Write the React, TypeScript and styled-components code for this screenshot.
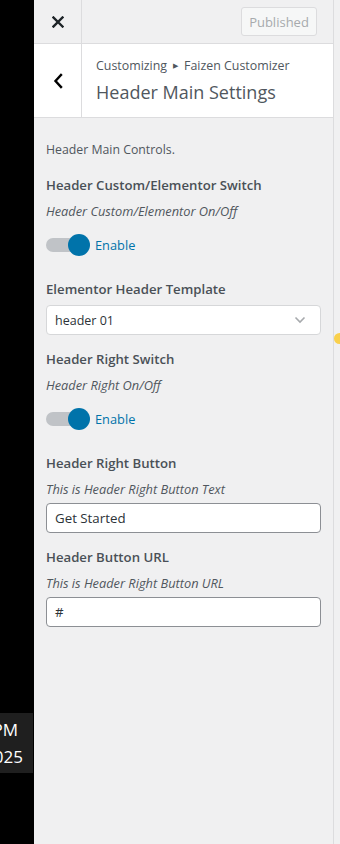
import React from "react";
import styled, { createGlobalStyle } from "styled-components";

const Global = createGlobalStyle`
  html, body { margin: 0; padding: 0; background: #f0f0f1; }
  body { font-family: "Open Sans", "Noto Sans", sans-serif; }
  * { box-sizing: border-box; }
`;

const Page = styled.div`
  position: relative;
  display: flex;
  width: 340px;
  height: 844px;
  overflow: hidden;
  background: #f0f0f1;
`;

const Strip = styled.div`
  flex: none;
  width: 34px;
  background: #000;
  display: flex;
  flex-direction: column;
  justify-content: flex-end;
  padding-bottom: 71px;
`;

const Clock = styled.div`
  width: 33px;
  height: 60px;
  background: #1f1f1f;
  color: #fff;
  font-family: "Open Sans", sans-serif;
  font-size: 17px;
  line-height: 27px;
  display: flex;
  flex-direction: column;
  justify-content: center;
  align-items: flex-end;
  overflow: hidden;
`;

const ClockLine = styled.span<{ $pr: number }>`
  padding-right: ${(p) => p.$pr}px;
  white-space: nowrap;
`;

const Panel = styled.div`
  flex: none;
  width: 300px;
  height: 100%;
  border-right: 1px solid #dcdcde;
  display: flex;
  flex-direction: column;
  color: #50575e;
`;

const TopBar = styled.div`
  height: 44px;
  display: flex;
  align-items: center;
  border-bottom: 1px solid #dcdcde;
`;

const IconCell = styled.div`
  width: 48px;
  height: 100%;
  border-right: 1px solid #dcdcde;
  display: flex;
  align-items: center;
  justify-content: center;
  color: #1d2327;
`;

const PublishedButton = styled.div`
  margin-left: auto;
  margin-right: 16px;
  width: 76px;
  height: 29px;
  border: 1px solid #dcdcde;
  border-radius: 3px;
  background: #f6f7f7;
  color: #a7aaad;
  font-size: 13px;
  display: flex;
  align-items: center;
  justify-content: center;
`;

const SectionHeader = styled.div`
  height: 74px;
  background: #fff;
  border-bottom: 1px solid #dcdcde;
  display: flex;
`;

const TitleBlock = styled.div`
  padding: 12px 0 0 14px;
  display: flex;
  flex-direction: column;
`;

const Breadcrumb = styled.div`
  font-size: 12.4px;
  line-height: 20px;
  color: #50575e;
  display: flex;
  align-items: center;
  gap: 6px;
`;

const Arrow = styled.span`
  font-size: 7px;
  color: #50575e;
`;

const Title = styled.div`
  font-size: 18px;
  line-height: 30px;
  color: #50575e;
  margin-top: 1px;
`;

const Content = styled.div`
  padding: 22px 12px 0 12px;
  display: flex;
  flex-direction: column;
`;

const Intro = styled.div`
  font-size: 12.3px;
  line-height: 20px;
  margin-bottom: 15px;
`;

const Control = styled.div`
  display: flex;
  flex-direction: column;
  margin-bottom: 14px;
`;

const Heading = styled.div`
  font-size: 13.2px;
  font-weight: 600;
  line-height: 20px;
  color: #4a5057;
  margin-bottom: 6px;
`;

const Desc = styled.div`
  font-size: 12.8px;
  font-style: italic;
  line-height: 20px;
  color: #50575e;
  margin-bottom: 4px;
`;

const ToggleRow = styled.div`
  margin-top: 9px;
  margin-bottom: 9px;
  height: 22px;
  display: flex;
  align-items: center;
  gap: 5px;
`;

const Toggle = styled.div`
  position: relative;
  width: 44px;
  height: 22px;
`;

const Track = styled.div`
  position: absolute;
  left: 0;
  top: 4px;
  width: 36px;
  height: 14px;
  border-radius: 7px;
  background: #c0c3c7;
`;

const Knob = styled.div`
  position: absolute;
  right: 0;
  top: 0;
  width: 22px;
  height: 22px;
  border-radius: 50%;
  background: #0073aa;
`;

const ToggleLabel = styled.span`
  font-size: 12.8px;
  color: #0073aa;
`;

const Field = styled.div<{ $light?: boolean }>`
  height: 30px;
  width: 275px;
  border: 1px solid ${(p) => (p.$light ? "#d6d7d9" : "#8c8f94")};
  border-radius: 4px;
  background: #fff;
  display: flex;
  align-items: center;
  padding: 0 14px 0 8px;
  color: #2c3338;
  font-size: ${(p) => (p.$light ? "12.5px" : "13.3px")};
`;

const FieldText = styled.span`
  flex: 1;
`;

const Dot = styled.div`
  position: absolute;
  left: 334px;
  top: 333px;
  width: 11px;
  height: 11px;
  border-radius: 50%;
  background: #f9d04c;
`;

const SwitchControl = ({ title, desc }: { title: string; desc: string }) => (
  <Control>
    <Heading>{title}</Heading>
    <Desc>{desc}</Desc>
    <ToggleRow>
      <Toggle>
        <Track />
        <Knob />
      </Toggle>
      <ToggleLabel>Enable</ToggleLabel>
    </ToggleRow>
  </Control>
);

export default function App() {
  return (
    <>
      <Global />
      <Page>
        <Strip>
          <Clock>
            <ClockLine $pr={15}>PM</ClockLine>
            <ClockLine $pr={10}>025</ClockLine>
          </Clock>
        </Strip>
        <Panel>
          <TopBar>
            <IconCell>
              <svg width="12" height="12" viewBox="0 0 12 12">
                <path d="M1.5 1.5 L10.5 10.5 M10.5 1.5 L1.5 10.5" stroke="#1d2327" strokeWidth="2.4" strokeLinecap="square" />
              </svg>
            </IconCell>
            <PublishedButton>Published</PublishedButton>
          </TopBar>
          <SectionHeader>
            <IconCell>
              <svg width="10" height="16" viewBox="0 0 10 16">
                <path d="M8 2 L2.5 8 L8 14" stroke="#000" strokeWidth="2.4" fill="none" strokeLinecap="square" />
              </svg>
            </IconCell>
            <TitleBlock>
              <Breadcrumb>
                <span>Customizing</span>
                <Arrow>▶</Arrow>
                <span>Faizen Customizer</span>
              </Breadcrumb>
              <Title>Header Main Settings</Title>
            </TitleBlock>
          </SectionHeader>
          <Content>
            <Intro>Header Main Controls.</Intro>
            <SwitchControl title="Header Custom/Elementor Switch" desc="Header Custom/Elementor On/Off" />
            <Control>
              <Heading>Elementor Header Template</Heading>
              <Field $light>
                <FieldText>header 01</FieldText>
                <svg width="12" height="8" viewBox="0 0 12 8">
                  <path d="M1.5 1.5 L6 6 L10.5 1.5" stroke="#a7aaad" strokeWidth="1.6" fill="none" />
                </svg>
              </Field>
            </Control>
            <SwitchControl title="Header Right Switch" desc="Header Right On/Off" />
            <Control>
              <Heading>Header Right Button</Heading>
              <Desc>This is Header Right Button Text</Desc>
              <Field>
                <FieldText>Get Started</FieldText>
              </Field>
            </Control>
            <Control>
              <Heading>Header Button URL</Heading>
              <Desc>This is Header Right Button URL</Desc>
              <Field>
                <FieldText>#</FieldText>
              </Field>
            </Control>
          </Content>
        </Panel>
        <Dot />
      </Page>
    </>
  );
}
